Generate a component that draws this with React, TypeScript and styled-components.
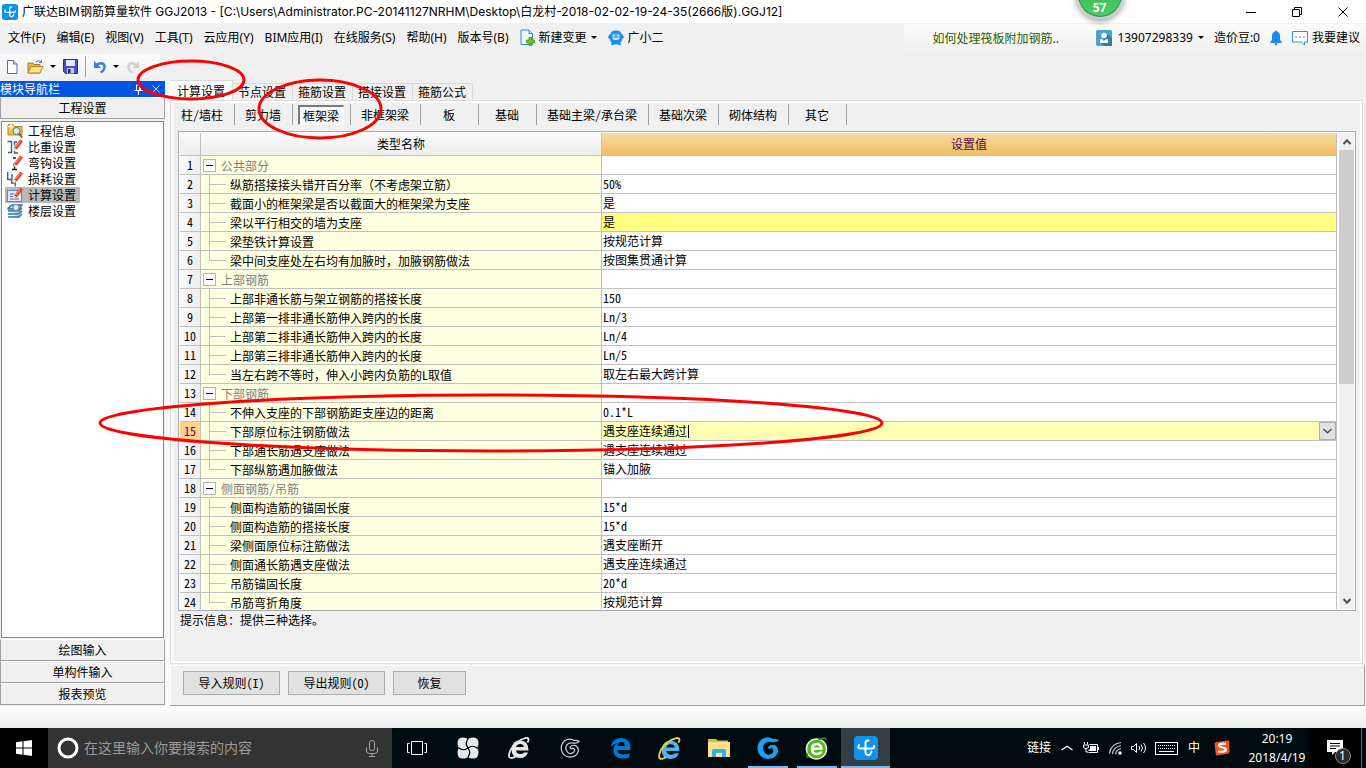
import React from "react";
import styled, { createGlobalStyle, css } from "styled-components";

const uiFont = `"Noto Sans", "Noto Sans CJK SC", sans-serif`;
const titleFont = `Inter, "Noto Sans CJK SC", sans-serif`;
const songFont = `"Noto Sans Mono CJK SC", "Noto Sans CJK SC", monospace`;

const GlobalStyle = createGlobalStyle`
  *, *::before, *::after { box-sizing: border-box; }
  body { margin: 0; background: #f0f0f0; color: #000; font: 12px/16px ${songFont}; }
  button, input { font: inherit; color: inherit; margin: 0; padding: 0; border: 0; background: none; border-radius: 0; outline: 0; }
  svg { display: block; flex: none; }
  a { color: inherit; text-decoration: none; }
  ul { margin: 0; padding: 0; list-style: none; }
`;

const Screen = styled.div`
  position: relative;
  display: flex;
  flex-direction: column;
  height: 100vh;
  overflow: hidden;
`;

/* ---------- title, menu and tool bars ---------- */

const TitleBar = styled.header`
  display: flex;
  align-items: center;
  flex: none;
  height: 23px;
  padding-left: 2px;
  background: #fff;
`;

const TitleText = styled.h1`
  flex: 1;
  margin: 0 0 0 4px;
  font-family: ${titleFont};
  font-size: 12px;
  font-weight: 400;
  white-space: nowrap;
`;

const WindowButton = styled.button`
  display: flex;
  align-items: center;
  justify-content: center;
  width: 46px;
  height: 22px;
`;

const Ball = styled.div`
  position: absolute;
  top: -30px;
  left: 80.5%;
  transform: translateX(-50%);
  display: flex;
  align-items: flex-end;
  justify-content: center;
  width: 48px;
  height: 49px;
  padding-bottom: 2px;
  border: 2px solid #c9c9c9;
  border-radius: 50%;
  background: linear-gradient(#3fae52, #47cf62);
  box-shadow: inset 0 0 0 1px #2a8a48, 0 2px 6px #0006;
  color: #fff;
  font: 700 12px/14px ${uiFont};
`;

const MenuBar = styled.nav`
  display: flex;
  align-items: center;
  flex: none;
  height: 29px;
  padding-left: 8px;
  font-family: ${uiFont};
  white-space: nowrap;
`;

const MenuList = styled.div`
  display: flex;
  align-items: center;
  gap: 11px;
  flex: 1;
`;

const MenuButton = styled.button`
  display: flex;
  align-items: center;
  gap: 4px;
  white-space: nowrap;
`;

const Caret = styled.span`
  width: 0;
  height: 0;
  border: 3px solid transparent;
  border-top-color: #000;
  border-bottom: 0;
`;

const HelpStrip = styled.div`
  display: flex;
  align-items: center;
  height: 28px;
  width: 188px;
  padding-left: 28px;
  background: linear-gradient(#fbfbfb, #f1f1f1);
  border-radius: 3px 0 0 0;
`;

const HelpLink = styled.a`
  color: #2d6200;
  font-family: "Noto Sans CJK SC", sans-serif;
`;

const AccountStrip = styled.div`
  display: flex;
  align-items: center;
  gap: 10px;
  height: 28px;
  padding: 0 6px 0 4px;
  background: linear-gradient(#fbfbfb, #f1f1f1);
`;

const AccountButton = styled(MenuButton)`
  gap: 5px;
`;

const ToolBar = styled.div`
  display: flex;
  align-items: center;
  flex: none;
  gap: 7px;
  width: 160px;
  height: 25px;
  margin: 2px 0 1px;
  padding-left: 4px;
  background: linear-gradient(#fcfcfc, #f0f0f0);
`;

const ToolButton = styled.button`
  display: flex;
  align-items: center;
  gap: 6px;
`;

const ToolDivider = styled.span`
  width: 1px;
  height: 21px;
  background: #a0a0a0;
`;

/* ---------- navigation column ---------- */

const Workspace = styled.div`
  display: flex;
  flex: 1;
  min-height: 0;
`;

const SideBar = styled.aside`
  display: flex;
  flex-direction: column;
  flex: none;
  width: 165px;
  margin: 1px 0;
`;

const SideTitle = styled.div`
  display: flex;
  align-items: center;
  flex: none;
  height: 16px;
  background: #0054e3;
  color: #fff;
`;

const SideTitleText = styled.h2`
  flex: 1;
  margin: 0;
  font-size: 12px;
  font-weight: 400;
`;

const SideTitleButton = styled.button`
  display: flex;
  align-items: center;
  justify-content: center;
  width: 18px;
  height: 16px;
`;

const SideSection = styled.button`
  flex: none;
  height: 22px;
  border: 1px solid #a0a0a0;
  border-top-color: #fff;
  background: #f0f0f0;
  text-align: center;
`;

const SideList = styled.ul`
  flex: 1;
  min-height: 0;
  margin: 2px 1px 1px;
  padding: 1px 2px;
  border: 1px solid #828790;
  background: #fff;
`;

const SideItem = styled.button<{ $active?: boolean }>`
  display: flex;
  align-items: center;
  gap: 5px;
  height: 16px;
  margin-left: 1px;
  padding: 0 4px 0 2px;
  white-space: nowrap;
  background: ${(p) => (p.$active ? "#b8b8b8" : "none")};
`;

const Splitter = styled.div`
  flex: none;
  width: 5px;
  background: #f8f8f8;
`;

/* ---------- settings panel ---------- */

const Main = styled.main`
  display: flex;
  flex-direction: column;
  flex: 1;
  min-width: 0;
`;

const Tabs = styled.div`
  display: flex;
  align-items: flex-end;
  flex: none;
  height: 20px;
`;

const Tab = styled.button<{ $active?: boolean }>`
  height: 17px;
  padding: 0 6px 0 5px;
  border: 1px solid #d9d9d9;
  border-bottom: 0;
  border-left-width: 0;
  white-space: nowrap;
  ${(p) =>
    p.$active &&
    css`
      height: 20px;
      padding: 0 7px;
      background: #fff;
    `}
`;

const Sheet = styled.section`
  display: flex;
  flex-direction: column;
  flex: 1;
  min-height: 0;
  margin-right: 3px;
  border: 1px solid #dcdcdc;
  background: #f0f0f0;
  box-shadow: inset 0 0 0 2px #fff;
  padding: 3px 6px 2px 0;
`;

const Kinds = styled.div`
  display: flex;
  flex: none;
  height: 21px;
`;

const Kind = styled.span`
  display: flex;
  align-items: stretch;
  justify-content: center;
  min-width: 58px;
  padding: 0 6px 0 5px;
  border-right: 1px solid #a0a0a0;
`;

const KindButton = styled.button<{ $active?: boolean }>`
  padding: 0 5px;
  white-space: nowrap;
  ${(p) =>
    p.$active &&
    css`
      margin-top: 1px;
      padding: 0 4px 0 3px;
      border: 1px solid #fff;
      border-top: 2px solid #7a7a7a;
      border-left: 2px solid #7a7a7a;
      background: repeating-conic-gradient(#fff 0 25%, #f0f0f0 0 50%) 0 0 / 2px 2px;
    `}
`;

const GridBox = styled.div`
  display: flex;
  flex: 1;
  min-height: 0;
  margin: 6px 0 0 7px;
  padding: 1px;
  border: 1px solid #a5a9b1;
  background: #fff;
`;

const GridView = styled.div`
  flex: 1;
  min-width: 0;
  overflow: hidden;
`;

const Grid = styled.table`
  width: 100%;
  table-layout: fixed;
  border-collapse: separate;
  border-spacing: 0;

  th,
  td {
    height: 19px;
    padding: 0;
    border: 0 solid #c0c0c0;
    border-width: 0 1px 1px 0;
    font-weight: 400;
    line-height: 18px;
    white-space: nowrap;
    overflow: hidden;
  }
`;

const IndexCol = styled.col`
  width: 21px;
`;
const NameCol = styled.col`
  width: 401px;
`;

const HeadCell = styled.th<{ $current?: boolean }>`
  && {
    height: 23px;
    background: ${(p) =>
      p.$current ? "linear-gradient(#f9d9a2, #efbe62)" : "linear-gradient(#fafafa, #eeeeee)"};
    color: ${(p) => (p.$current ? "#5a0a3c" : "#000")};
  }
`;

const IndexCell = styled.th<{ $current?: boolean }>`
  background: ${(p) => (p.$current ? "#ffd28c" : "linear-gradient(90deg, #fbfbfb, #eeeeee)")};
  color: ${(p) => (p.$current ? "#600060" : "#000")};
`;

const NameCell = styled.td`
  background: #ffffe1;
`;

const NameLine = styled.div<{ $group?: boolean }>`
  display: flex;
  align-items: center;
  height: 18px;
  padding-left: ${(p) => (p.$group ? 2 : 8)}px;
  gap: ${(p) => (p.$group ? 5 : 4)}px;
  color: ${(p) => (p.$group ? "#808080" : "#000")};
`;

const NameText = styled.span`
  padding-top: 2px;
  line-height: 16px;
`;

const Branch = styled.span<{ $last?: boolean }>`
  align-self: stretch;
  width: 17px;
  background: linear-gradient(#c0c0c0, #c0c0c0) 0 0 / 1px ${(p) => (p.$last ? "50%" : "100%")} no-repeat,
    linear-gradient(#c0c0c0, #c0c0c0) 0 50% / 100% 1px no-repeat;
`;

const Toggle = styled.button`
  display: flex;
  align-items: center;
  justify-content: center;
  width: 13px;
  height: 13px;
  border: 1px solid #b4b4b4;
  background: #fff;

  &::before {
    content: "";
    width: 7px;
    height: 1px;
    background: #000;
  }
`;

const ValueCell = styled.td<{ $tone?: string }>`
  background: ${(p) => p.$tone || "#fff"};
`;

const ValueText = styled.span`
  padding-left: 1px;
`;

const Editor = styled.div`
  display: flex;
  align-items: center;
  height: 18px;
  padding-left: 1px;
`;

const EditorInput = styled.input`
  width: 85px;
  height: 16px;
`;

const EditorCaret = styled.span`
  width: 1px;
  height: 13px;
  margin-right: auto;
  background: #000;
`;

const DropButton = styled.button`
  display: flex;
  align-items: center;
  justify-content: center;
  width: 17px;
  height: 18px;
  border: 1px solid #adadad;
  background: #e1e1e1;
`;

const ScrollTrack = styled.div`
  display: flex;
  flex-direction: column;
  flex: none;
  width: 15px;
  margin: 0 0 0 2px;
  background: #f0f0f0;
`;

const ScrollArrow = styled.button`
  display: flex;
  align-items: center;
  justify-content: center;
  height: 17px;
`;

const ScrollRail = styled.div`
  flex: 1;
`;

const ScrollThumb = styled.div`
  height: 53%;
  background: #cdcdcd;
`;

const Hint = styled.p`
  flex: none;
  height: 50px;
  margin: 0;
  padding: 1px 0 0 9px;
`;

const ActionBar = styled.div`
  display: flex;
  align-items: center;
  flex: none;
  gap: 8px;
  height: 41px;
  margin: 1px 1px 0 0;
  padding: 0 0 4px 13px;
  border: solid #a0a0a0;
  border-width: 0 1px 1px 0;
  box-shadow: inset 1px 1px 0 #fff;
`;

const ActionButton = styled.button<{ $wide?: boolean }>`
  width: ${(p) => (p.$wide ? 97 : 73)}px;
  height: 24px;
  border: 1px solid #adadad;
  background: #e1e1e1;
  white-space: nowrap;
`;

const StatusBar = styled.footer`
  flex: none;
  height: 22px;
  background: linear-gradient(#fdfdfd, #f0f0f0);
`;

/* ---------- task bar ---------- */

const TaskBar = styled.div`
  display: flex;
  flex: none;
  height: 40px;
  background: #000b0f;
  color: #fff;
  font-family: ${uiFont};
`;

const StartButton = styled.button`
  display: flex;
  align-items: center;
  justify-content: center;
  width: 48px;
  background: #000;
`;

const SearchBox = styled.label`
  display: flex;
  align-items: center;
  gap: 5px;
  width: 344px;
  padding: 0 13px 0 9px;
  background: #333;
`;

const SearchInput = styled.input`
  flex: 1;
  min-width: 0;
  font-size: 14px;

  &::placeholder {
    color: #9a9a9a;
    opacity: 1;
  }
`;

const TaskGroup = styled.div`
  display: flex;
  margin-right: 1px;
`;

const TaskButton = styled.button<{ $wide?: boolean; $open?: boolean; $active?: boolean }>`
  display: flex;
  align-items: center;
  justify-content: center;
  width: ${(p) => (p.$wide ? 51 : 49)}px;
  background: ${(p) => (p.$active ? "#333d42" : "none")};
  ${(p) =>
    (p.$open || p.$active) &&
    css`
      &::after {
        content: "";
        position: absolute;
        bottom: 0;
        width: ${p.$active ? 49 : 40}px;
        height: 2px;
        background: #76b9ed;
      }
    `}
`;

const Tray = styled.div`
  display: flex;
  align-items: center;
  margin-left: auto;
  gap: 8px;
  padding-right: 2px;
`;

const TrayButton = styled.button<{ $wide?: boolean }>`
  display: flex;
  align-items: center;
  justify-content: center;
  min-width: ${(p) => (p.$wide ? 24 : 16)}px;
  white-space: nowrap;
`;

const Clock = styled.button`
  width: 60px;
  margin: 0 0 0 5px;
  line-height: 19px;
  text-align: center;
`;

const NoticeArea = styled.div`
  display: flex;
  align-items: center;
  justify-content: center;
  width: 52px;
  background: #000;
`;

const Notice = styled.button`
  position: relative;
`;

const NoticeCount = styled.span`
  position: absolute;
  left: 8px;
  top: 8px;
  width: 16px;
  height: 16px;
  border: 1px solid #8a8a8a;
  border-radius: 50%;
  background: #2b2b2b;
  line-height: 14px;
  text-align: center;
`;

const DesktopEdge = styled.button`
  width: 5px;
  border-left: 1px solid #6a6a6a;
`;

const Markup = styled.svg`
  position: absolute;
  inset: 0;
  width: 100%;
  height: 100%;
  pointer-events: none;
`;

/* ---------- drawings ---------- */

const Logo = ({ size }: { size: number }) => (
  <svg width={size} height={size} viewBox="0 0 24 24">
    <rect width="24" height="24" rx="4" fill="#0a93f0" />
    <path
      d="M14.500 4.500q-3-.5-3 2.500v9q0 3.500 4 3M5 9q-2 3.500 1.500 3.500h11.500q2.500 0 2-2.500M17.500 15.500q-.5 2.500-2 3"
      fill="none"
      stroke="#fff"
      strokeWidth="2"
      strokeLinecap="round"
    />
  </svg>
);

const NewDocIcon = () => (
  <svg width="16" height="16" viewBox="0 0 16 16">
    <path d="M3.500 1.500h6l3.500 3.500v9.500h-9.500z" fill="#fff" stroke="#5b6f8f" />
    <path d="M9.500 1.500v3.500h3.500" fill="#dfe8f4" stroke="#5b6f8f" />
  </svg>
);

const OpenIcon = () => (
  <svg width="17" height="16" viewBox="0 0 17 16">
    <path d="M1 4h5l1 1.500h6V14H1z" fill="#e9b44c" stroke="#a87a22" />
    <path d="M1 14l3-6.500h12L13 14z" fill="#ffe08a" stroke="#b98525" />
    <path d="M9 3q3-3 5 0M14.500 1v2.500H12" fill="none" stroke="#54749c" />
  </svg>
);

const SaveIcon = () => (
  <svg width="15" height="15" viewBox="0 0 15 15">
    <path d="M.5.5h14v14h-12l-2-2z" fill="#4a4fc4" stroke="#2c2f87" />
    <rect x="3" y="1" width="9" height="6" fill="#e4e9fb" />
    <rect x="4" y="9" width="7" height="5.500" fill="#c9cdd8" />
    <rect x="5" y="10" width="2.500" height="4" fill="#23266b" />
  </svg>
);

const UndoIcon = ({ flip, color }: { flip?: boolean; color: string }) => (
  <svg width="14" height="14" viewBox="0 0 14 14">
    <g transform={flip ? "matrix(-1 0 0 1 14 0)" : undefined}>
      <path d="M3 5q7-4 8.500 1 .5 4-4 6.500" fill="none" stroke={color} strokeWidth="2.500" />
      <path d="M1 1v7h7z" fill={color} />
    </g>
  </svg>
);

const ChangeIcon = () => (
  <svg width="15" height="17" viewBox="0 0 15 17">
    <path d="M1 1h8l3.500 3.500V15.500H1z" fill="#eef6fd" stroke="#3f86c8" />
    <path d="M9 1v3.500h3.500" fill="#cfe3f5" stroke="#3f86c8" />
    <path d="M9 8.500h3v2.500h2.500v3H12v2.500H9V14H6.500v-3H9z" fill="#6cc31b" stroke="#3f8e10" strokeWidth=".7" />
  </svg>
);

const MascotIcon = () => (
  <svg width="16" height="16" viewBox="0 0 16 16">
    <path d="M3.500 1.500q4.500-2 9 0l1 2.500q2 .5 2.500 3.500l-2 2q0 2-1.500 3l.5 2q-2 1.500-3 0H6q-1 1.500-3 0l.5-2Q2 11.500 2 9.500l-2-2Q.5 4.500 2.500 4z" fill="#1f8fe8" />
    <rect x="3.500" y="3.500" width="9" height="6.500" rx="3" fill="#49b3f7" />
    <path d="M5.800 4.500v2M10.200 4.500v2M5 8q3 2.500 6 0" fill="none" stroke="#fff" strokeWidth="1.200" />
  </svg>
);

const UserIcon = () => (
  <svg width="16" height="16" viewBox="0 0 16 16">
    <rect width="16" height="16" rx="2" fill="#4aa0d6" />
    <path d="M5 13l3 3h8V8l-5-4z" fill="#2f7cac" />
    <circle cx="8" cy="5.500" r="2.800" fill="#fff" />
    <path d="M4 9.500l2-.5 2 2 2-2 2 .5v3.500H4z" fill="#fff" />
  </svg>
);

const BellIcon = () => (
  <svg width="12" height="16" viewBox="0 0 12 16">
    <path d="M6 .5q1 0 1 1 3 1 3 4.500v3.500l2 3.500H0l2-3.500V6q0-3.500 3-4.500 0-1 1-1z" fill="#1e88f0" />
    <path d="M4.500 13.500h3L6 15.500z" fill="#1a3d68" />
  </svg>
);

const ChatIcon = () => (
  <svg width="16" height="16" viewBox="0 0 16 16">
    <path d="M.5 1.500h15v10.500h-3v3l-3-3h-9z" fill="#fff" stroke="#2f8fe8" />
    <path d="M3 7h2M7 7h2M11 7h2" stroke="#2f8fe8" strokeWidth="1.200" />
  </svg>
);

const PinIcon = () => (
  <svg width="9" height="11" viewBox="0 0 9 11">
    <path d="M2.500 1h4M2.500 1v5M5.500 1v5M6.500 1v5M.5 6.500h8M4.500 7v4" stroke="#fff" fill="none" />
  </svg>
);

const CrossIcon = ({ size, color }: { size: number; color: string }) => (
  <svg width={size} height={size} viewBox="0 0 10 10">
    <path d="M.5.5l9 9M9.500.5l-9 9" stroke={color} />
  </svg>
);

const Chevron = ({ up, w = 8, color = "#505050", stroke = 2 }: { up?: boolean; w?: number; color?: string; stroke?: number }) => (
  <svg width={w} height="6" viewBox={`0 0 ${w} 6`}>
    <path d={up ? `M.5 5L${w / 2} 1.300 ${w - 0.5} 5` : `M.5 1L${w / 2} 4.700 ${w - 0.5} 1`} fill="none" stroke={color} strokeWidth={stroke} />
  </svg>
);

const Pencil = () => (
  <>
    <path d="M7 8.500L13 .5l3 2L9.800 10.500z" fill="#e8442a" />
    <path d="M8.500 8L13.500 1.800" stroke="#ff9c84" />
    <path d="M7 8.500l2.800 2L6 12.500z" fill="#f0cf9a" />
  </>
);

const NavIcon = ({ kind }: { kind: string }) => (
  <svg width="16" height="16" viewBox="0 0 16 16">
    {kind === "info" && (
      <>
        <path d="M1 1.500h5l1 2h8V12H1z" fill="#f0c04a" stroke="#b88a22" />
        <path d="M1 3.500h6M4 .5v6" stroke="#fff6c8" strokeWidth="1.500" />
        <circle cx="9.500" cy="8" r="3.500" fill="#d5eafc" stroke="#4d6f96" />
        <path d="M12 10.500l3 4" stroke="#8a5a1c" strokeWidth="2" />
      </>
    )}
    {kind === "weight" && (
      <>
        <path d="M.5 2.500h4v5.500M4.500 7.500v6H1M10 3H7.500v3.500M7.500 12v2H11" fill="none" stroke="#3b5f98" strokeWidth="1.400" />
        <Pencil />
      </>
    )}
    {kind === "hook" && (
      <>
        <path d="M6 3h3M7.500 8v6M5 14.500h5M6 10h3" fill="none" stroke="#222" strokeWidth="1.400" />
        <Pencil />
      </>
    )}
    {kind === "loss" && (
      <>
        <path d="M.700 1v7.500h4V12h3.500v3.500M5 3v5" fill="none" stroke="#3b5f98" strokeWidth="1.400" />
        <Pencil />
      </>
    )}
    {kind === "calc" && (
      <>
        <rect x=".5" y="3.500" width="14" height="11" fill="#dbe9fa" stroke="#5c86c0" />
        <path d="M3 7h4M3 9.500h3M3 12h9" stroke="#3f6fb4" />
        <Pencil />
      </>
    )}
    {kind === "floor" && (
      <>
        <path d="M1 5l4-3h10l-3 4H1zM1 8h11l3-3M1 11h11l3-3M1 14h11l3-3" fill="#9ccdf2" stroke="#2b78b4" strokeWidth="1.300" />
        <circle cx="9" cy="4.500" r="3" fill="#e6f3fd" stroke="#6a86a6" />
        <path d="M11 6.500l3.500 3" stroke="#b07a2c" strokeWidth="1.500" />
      </>
    )}
  </svg>
);

const LetterE = ({ body, ring, size = 24 }: { body: string; ring?: string; size?: number }) => (
  <svg width={size} height={size} viewBox="0 0 24 24">
    <path d="M21.500 14.500H9q.5 3.500 4.500 3.500 2.500 0 3.500-1.500h4q-2 5.500-8 5.500-8.500 0-8.500-8.500Q5 4.500 13 4.500q8.500 0 8.500 10zM9 11h8q-.5-3-3.800-3T9 11z" fill={body} />
    {ring && <path d="M20.500 6.500q3-5-2-4.500Q9 4.500 3.500 14q-3.500 8 1 8 2 0 4-1.500" fill="none" stroke={ring} strokeWidth="1.800" />}
  </svg>
);

const EdgeIcon = () => (
  <svg width="22" height="22" viewBox="0 0 22 22">
    <path d="M1 9.500Q2.500 1 11 1q9.500.5 9.500 9.500V13h-13q.5 4.500 6 4.500 3.500 0 6-1.500v4q-3 1.500-7 1.500-9-.5-9-8.500 0-4.500 4-7Q3 7 1 9.500zM7.500 9h7.500q0-4-3.500-4t-4 4z" fill="#0078d7" />
  </svg>
);

const SwirlG = ({ color, outline }: { color: string; outline?: boolean }) => (
  <svg width={outline ? 20 : 24} height={outline ? 20 : 24} viewBox="0 0 24 24">
    <path
      d="M23 4q-3-1.500-6-1Q12-.5 6 3q-5 4-4.500 10.500Q3 22 11.500 23q8.500 0 10.500-7 .5-5-3.500-7-4-1-6 1.500-1 2 1 2.500 1.500-1.500 3-.5 2 3-.5 5-3.500 2.500-7-.5-3.500-4-1-8.500 2.500-3.500 7-2.500Q20.500 7 23 4z"
      fill={outline ? "none" : color}
      stroke={color}
      strokeWidth={outline ? 1.4 : 0}
    />
  </svg>
);

const PetalIcon = () => (
  <svg width="22" height="22" viewBox="0 0 22 22">
    <path d="M6 .5q4 0 5 2 1-2 5-2 5.500 0 5.500 5.500 0 4-2 5 2 1 2 5 0 5.500-5.500 5.500-4 0-5-2-1 2-5 2-5.500 0-5.500-5.500 0-4 2-5-2-1-2-5Q.5.5 6 .5z" fill="#e8e8e8" />
    {[0, 90, 180, 270].map((a) => (
      <g key={a} transform={`rotate(${a} 11 11)`}>
        <path d="M11 11q-3.500-4.500 0-9" fill="none" stroke="#000b0f" strokeWidth="1.200" />
      </g>
    ))}
  </svg>
);

const FolderIcon = () => (
  <svg width="22" height="18" viewBox="0 0 22 18">
    <path d="M0 0h8l1.500 1.500H20V5H0z" fill="#e8b53c" />
    <path d="M0 3h22v15H0z" fill="#ffe08c" />
    <path d="M4 18v-6q0-2 2-2h10q2 0 2 2v6h-4v-4H8v4z" fill="#36b0e8" />
  </svg>
);

const GreenE = () => (
  <svg width="23" height="23" viewBox="0 0 24 24">
    <circle cx="12" cy="12.500" r="10.500" fill="#53b81f" stroke="#e9f5e0" strokeWidth="1.500" />
    <path d="M18.500 13.500H9q.5 3 3.500 3 2 0 3-1.500h3q-1.500 4-6 4-6.500 0-6.500-6.500T12.500 6q6 0 6 7.500zM9 11h6.500q-.5-2.500-3-2.500T9 11z" fill="#fff" />
    <path d="M4 21Q1 22 2.500 17M14 3q8-4 8 0" fill="none" stroke="#2f8e10" strokeWidth="1.500" />
  </svg>
);

/* ---------- data ---------- */

const menus = ["文件(F)", "编辑(E)", "视图(V)", "工具(T)", "云应用(Y)", "BIM应用(I)", "在线服务(S)", "帮助(H)", "版本号(B)"];

const navItems = [
  ["info", "工程信息"],
  ["weight", "比重设置"],
  ["hook", "弯钩设置"],
  ["loss", "损耗设置"],
  ["calc", "计算设置"],
  ["floor", "楼层设置"],
];

const tabs = ["计算设置", "节点设置", "箍筋设置", "搭接设置", "箍筋公式"];
const kinds = ["柱/墙柱", "剪力墙", "框架梁", "非框架梁", "板", "基础", "基础主梁/承台梁", "基础次梁", "砌体结构", "其它"];

type Row = { name: string; value?: string; group?: boolean; tone?: string; editing?: boolean };

const rows: Row[] = [
  { name: "公共部分", group: true },
  { name: "纵筋搭接接头错开百分率（不考虑架立筋）", value: "50%" },
  { name: "截面小的框架梁是否以截面大的框架梁为支座", value: "是" },
  { name: "梁以平行相交的墙为支座", value: "是", tone: "#ffff80" },
  { name: "梁垫铁计算设置", value: "按规范计算" },
  { name: "梁中间支座处左右均有加腋时，加腋钢筋做法", value: "按图集贯通计算" },
  { name: "上部钢筋", group: true },
  { name: "上部非通长筋与架立钢筋的搭接长度", value: "150" },
  { name: "上部第一排非通长筋伸入跨内的长度", value: "Ln/3" },
  { name: "上部第二排非通长筋伸入跨内的长度", value: "Ln/4" },
  { name: "上部第三排非通长筋伸入跨内的长度", value: "Ln/5" },
  { name: "当左右跨不等时，伸入小跨内负筋的L取值", value: "取左右最大跨计算" },
  { name: "下部钢筋", group: true },
  { name: "不伸入支座的下部钢筋距支座边的距离", value: "0.1*L" },
  { name: "下部原位标注钢筋做法", value: "遇支座连续通过", tone: "#ffffb3", editing: true },
  { name: "下部通长筋遇支座做法", value: "遇支座连续通过" },
  { name: "下部纵筋遇加腋做法", value: "锚入加腋" },
  { name: "侧面钢筋/吊筋", group: true },
  { name: "侧面构造筋的锚固长度", value: "15*d" },
  { name: "侧面构造筋的搭接长度", value: "15*d" },
  { name: "梁侧面原位标注筋做法", value: "遇支座断开" },
  { name: "侧面通长筋遇支座做法", value: "遇支座连续通过" },
  { name: "吊筋锚固长度", value: "20*d" },
  { name: "吊筋弯折角度", value: "按规范计算" },
];

const SettingRow = ({ row, index }: { row: Row; index: number }) => {
  const next = rows[index + 1];
  return (
    <tr>
      <IndexCell scope="row" $current={row.editing}>
        {index + 1}
      </IndexCell>
      <NameCell>
        <NameLine $group={row.group}>
          {row.group ? <Toggle aria-label={`折叠${row.name}`} /> : <Branch $last={!next || next.group} />}
          <NameText>{row.name}</NameText>
        </NameLine>
      </NameCell>
      <ValueCell $tone={row.tone}>
        {row.editing ? (
          <Editor>
            <EditorInput aria-label={row.name} defaultValue={row.value} />
            <EditorCaret />
            <DropButton aria-label="展开选项">
              <Chevron w={9} stroke={1.5} />
            </DropButton>
          </Editor>
        ) : (
          <ValueText>{row.value}</ValueText>
        )}
      </ValueCell>
    </tr>
  );
};

export default function App() {
  return (
    <Screen>
      <GlobalStyle />
      <TitleBar>
        <Logo size={16} />
        <TitleText>
          广联达BIM钢筋算量软件 GGJ2013 - [C:\Users\Administrator.PC-20141127NRHM\Desktop\白龙村-2018-02-02-19-24-35(2666版).GGJ12]
        </TitleText>
        <WindowButton aria-label="最小化">
          <svg width="10" height="10" viewBox="0 0 10 10">
            <path d="M0 5.500h10" stroke="#000" />
          </svg>
        </WindowButton>
        <WindowButton aria-label="还原">
          <svg width="10" height="10" viewBox="0 0 10 10">
            <path d="M.5 2.500h7v7h-7zM2.500 2.500v-2h7v7h-2" stroke="#000" fill="none" />
          </svg>
        </WindowButton>
        <WindowButton aria-label="关闭">
          <CrossIcon size={10} color="#000" />
        </WindowButton>
      </TitleBar>

      <MenuBar>
        <MenuList>
          {menus.map((m) => (
            <MenuButton key={m}>{m}</MenuButton>
          ))}
          <MenuButton>
            <ChangeIcon />
            新建变更
            <Caret />
          </MenuButton>
          <MenuButton>
            <MascotIcon />
            广小二
          </MenuButton>
        </MenuList>
        <HelpStrip>
          <HelpLink href="#help">如何处理筏板附加钢筋..</HelpLink>
        </HelpStrip>
        <AccountStrip>
          <AccountButton>
            <UserIcon />
            13907298339
            <Caret />
          </AccountButton>
          <span>造价豆:0</span>
          <MenuButton aria-label="通知">
            <BellIcon />
          </MenuButton>
          <MenuButton>
            <ChatIcon />
            我要建议
          </MenuButton>
        </AccountStrip>
      </MenuBar>

      <ToolBar>
        <ToolButton aria-label="新建">
          <NewDocIcon />
        </ToolButton>
        <ToolButton aria-label="打开">
          <OpenIcon />
          <Caret />
        </ToolButton>
        <ToolButton aria-label="保存">
          <SaveIcon />
        </ToolButton>
        <ToolDivider />
        <ToolButton aria-label="撤销">
          <UndoIcon color="#3f7fd8" />
          <Caret />
        </ToolButton>
        <ToolButton aria-label="恢复操作">
          <UndoIcon color="#d0d0d0" flip />
        </ToolButton>
      </ToolBar>

      <Workspace>
        <SideBar>
          <SideTitle>
            <SideTitleText>模块导航栏</SideTitleText>
            <SideTitleButton aria-label="固定">
              <PinIcon />
            </SideTitleButton>
            <SideTitleButton aria-label="关闭导航栏">
              <CrossIcon size={8} color="#fff" />
            </SideTitleButton>
          </SideTitle>
          <SideSection>工程设置</SideSection>
          <SideList>
            {navItems.map(([kind, label]) => (
              <li key={kind}>
                <SideItem $active={kind === "calc"}>
                  <NavIcon kind={kind} />
                  {label}
                </SideItem>
              </li>
            ))}
          </SideList>
          <SideSection>绘图输入</SideSection>
          <SideSection>单构件输入</SideSection>
          <SideSection>报表预览</SideSection>
        </SideBar>
        <Splitter />
        <Main>
          <Tabs role="tablist">
            {tabs.map((t, i) => (
              <Tab key={t} role="tab" aria-selected={i === 0} $active={i === 0}>
                {t}
              </Tab>
            ))}
          </Tabs>
          <Sheet>
            <Kinds>
              {kinds.map((k) => (
                <Kind key={k}>
                  <KindButton $active={k === "框架梁"}>{k}</KindButton>
                </Kind>
              ))}
            </Kinds>
            <GridBox>
              <GridView>
                <Grid>
                  <colgroup>
                    <IndexCol />
                    <NameCol />
                    <col />
                  </colgroup>
                  <thead>
                    <tr>
                      <HeadCell aria-label="序号" />
                      <HeadCell scope="col">类型名称</HeadCell>
                      <HeadCell scope="col" $current>
                        设置值
                      </HeadCell>
                    </tr>
                  </thead>
                  <tbody>
                    {rows.map((row, i) => (
                      <SettingRow key={i} row={row} index={i} />
                    ))}
                  </tbody>
                </Grid>
              </GridView>
              <ScrollTrack>
                <ScrollArrow aria-label="向上滚动">
                  <Chevron up />
                </ScrollArrow>
                <ScrollRail>
                  <ScrollThumb />
                </ScrollRail>
                <ScrollArrow aria-label="向下滚动">
                  <Chevron />
                </ScrollArrow>
              </ScrollTrack>
            </GridBox>
            <Hint>提示信息：提供三种选择。</Hint>
          </Sheet>
          <ActionBar>
            <ActionButton $wide>导入规则(I)</ActionButton>
            <ActionButton $wide>导出规则(O)</ActionButton>
            <ActionButton>恢复</ActionButton>
          </ActionBar>
        </Main>
      </Workspace>
      <StatusBar />

      <TaskBar>
        <StartButton aria-label="开始">
          <svg width="16" height="16" viewBox="0 0 16 16">
            <path d="M0 2.200L6.500 1.300V7.500H0zM7.500 1.200L16 0v7.500H7.500zM0 8.500h6.500v6.200L0 13.800zM7.500 8.500H16V16l-8.500-1.200z" fill="#fff" />
          </svg>
        </StartButton>
        <SearchBox>
          <svg width="22" height="22" viewBox="0 0 22 22">
            <circle cx="11" cy="11" r="9" fill="none" stroke="#fff" strokeWidth="3" />
          </svg>
          <SearchInput aria-label="搜索" placeholder="在这里输入你要搜索的内容" />
          <svg width="14" height="17" viewBox="0 0 14 17">
            <rect x="4.500" y=".5" width="5" height="10" rx="2" fill="none" stroke="#a8a8a8" />
            <path d="M1.500 7.500v3.500q0 2.500 3 2.500h5q3 0 3-2.500V7.500M7 13.500V16M4 16.500h6" fill="none" stroke="#a8a8a8" />
          </svg>
        </SearchBox>
        <TaskGroup>
          <TaskButton aria-label="任务视图">
            <svg width="20" height="14" viewBox="0 0 20 14">
              <path d="M4.500.5h11v13h-11zM2.500 2.500H.5v9h2M17.500 2.500h2v9h-2" fill="none" stroke="#fff" />
            </svg>
          </TaskButton>
        </TaskGroup>
        <TaskGroup>
          <TaskButton $wide aria-label="应用中心">
            <PetalIcon />
          </TaskButton>
          <TaskButton $wide aria-label="浏览器">
            <LetterE body="#e8e8e8" ring="#e8e8e8" />
          </TaskButton>
          <TaskButton $wide aria-label="广联达工作台">
            <SwirlG color="#d8d8d8" outline />
          </TaskButton>
        </TaskGroup>
        <TaskGroup>
          <TaskButton aria-label="Edge">
            <EdgeIcon />
          </TaskButton>
          <TaskButton aria-label="Internet Explorer">
            <LetterE body="#4fb4f0" ring="#f5cf3a" size={25} />
          </TaskButton>
          <TaskButton aria-label="文件资源管理器">
            <FolderIcon />
          </TaskButton>
          <TaskButton $open aria-label="广联达">
            <SwirlG color="#1b9ff0" />
          </TaskButton>
          <TaskButton $open aria-label="安全浏览器">
            <GreenE />
          </TaskButton>
          <TaskButton $active aria-label="钢筋算量">
            <Logo size={24} />
          </TaskButton>
        </TaskGroup>
        <Tray>
          <TrayButton>链接</TrayButton>
          <TrayButton aria-label="显示隐藏的图标">
            <Chevron up w={12} color="#fff" stroke={1.3} />
          </TrayButton>
          <TrayButton aria-label="电源">
            <svg width="16" height="12" viewBox="0 0 16 12">
              <path d="M1.500 0v2.500M4.500 0v2.500M.5 3h5v2q0 1.500-2.500 1.500T.5 5zM3 6.500V10h2" fill="none" stroke="#fff" />
              <path d="M6.500 2.500h8v8h-9" fill="none" stroke="#fff" />
              <path d="M7 4h6v5H5.500V7.500H7zM15 5h1v3h-1z" fill="#fff" />
            </svg>
          </TrayButton>
          <TrayButton aria-label="无线网络">
            <svg width="13" height="14" viewBox="0 0 13 14">
              <path d="M.5 12.500Q1.500 3 12 1.500M3.500 13Q4 6 12 4.500M6.500 13.200Q7 9 12 7.500" fill="none" stroke="#c8c8c8" strokeWidth="1.200" />
              <circle cx="11" cy="12" r="1.700" fill="#fff" />
            </svg>
          </TrayButton>
          <TrayButton aria-label="音量">
            <svg width="16" height="12" viewBox="0 0 16 12">
              <path d="M.5 4.500h2l3-3v9l-3-3h-2z" fill="none" stroke="#fff" />
              <path d="M8 4q1.500 2 0 4M10 2.500q3 3.500 0 7M12.500 1q4 5 0 10" fill="none" stroke="#fff" />
            </svg>
          </TrayButton>
          <TrayButton aria-label="触摸键盘">
            <svg width="23" height="13" viewBox="0 0 23 13">
              <rect x=".5" y=".5" width="22" height="12" fill="none" stroke="#fff" />
              <path d="M3 3.500h17M3 6.500h17" stroke="#fff" strokeDasharray="1 1" />
              <path d="M4 9.500h15" stroke="#fff" />
            </svg>
          </TrayButton>
          <TrayButton>中</TrayButton>
          <TrayButton $wide aria-label="输入法">
            <svg width="16" height="16" viewBox="0 0 16 16">
              <path d="M2 2L14 .5q1 0 1.200 1L15.500 12q0 1-1 1.500L3 15.500q-1 0-1.200-1L.5 4Q.5 2.500 2 2z" fill="#f4511e" />
              <path d="M12 4q-6-1-7 1 0 2 3.500 2.500T12 10q-1 2.500-8 1.500" fill="none" stroke="#fff" strokeWidth="2.200" />
            </svg>
          </TrayButton>
          <Clock>
            20:19
            <br />
            2018/4/19
          </Clock>
        </Tray>
        <NoticeArea>
          <Notice aria-label="通知中心">
            <svg width="17" height="16" viewBox="0 0 17 16">
              <path d="M0 0h16v12H8l-3 3v-3H0z" fill="#fff" />
              <path d="M3 3.500h10M3 6h10M3 8.500h6" stroke="#000" />
            </svg>
            <NoticeCount>1</NoticeCount>
          </Notice>
        </NoticeArea>
        <DesktopEdge aria-label="显示桌面" />
      </TaskBar>

      <Ball>57</Ball>
      <Markup fill="none" stroke="#f00" strokeWidth="3">
        <ellipse cx="191" cy="80" rx="53" ry="19" />
        <ellipse cx="320" cy="109" rx="61" ry="29" />
        <ellipse cx="491" cy="423" rx="391" ry="28" />
      </Markup>
    </Screen>
  );
}
